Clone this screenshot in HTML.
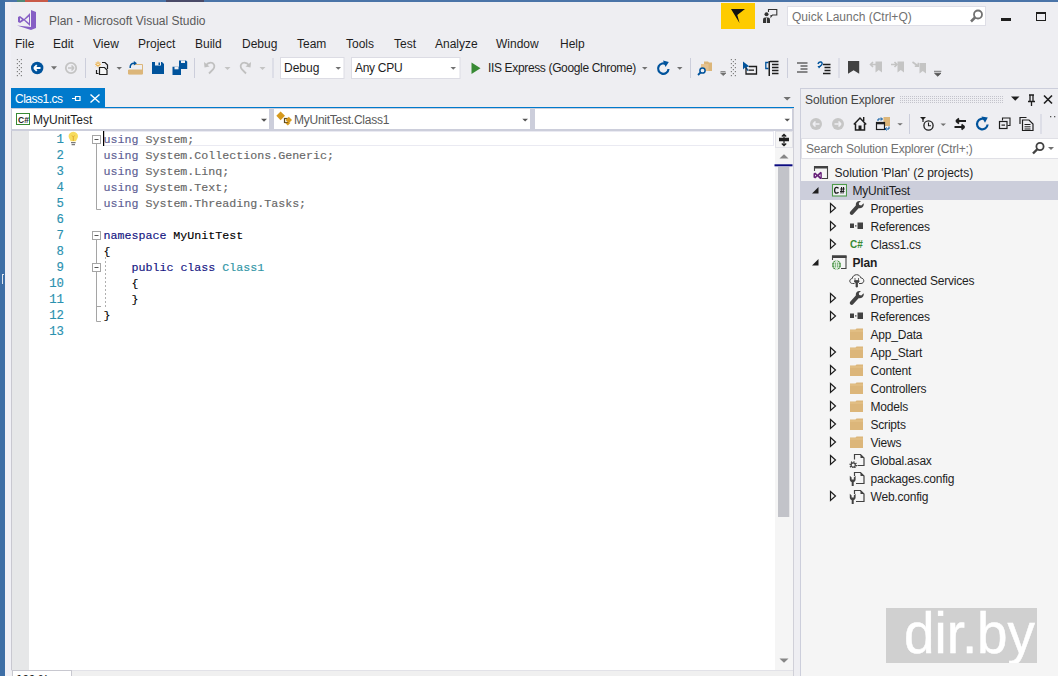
<!DOCTYPE html>
<html><head><meta charset="utf-8">
<style>
*{margin:0;padding:0;box-sizing:border-box}
html,body{width:1058px;height:676px;overflow:hidden;background:#eeeef2;font-family:"Liberation Sans",sans-serif;font-size:12px;color:#1e1e1e}
.a{position:absolute}
.t{position:absolute;white-space:nowrap;line-height:14px}
.mono{font-family:"Liberation Mono",monospace;font-size:11.65px;line-height:16px;white-space:pre;-webkit-text-stroke:0.15px currentColor}
.arr{position:absolute;width:0;height:0;border-left:3px solid transparent;border-right:3px solid transparent;border-top:3px solid #717171}
.sep{position:absolute;width:1px;background:#cccedb}
</style></head><body>
<!-- frame -->
<div class="a" style="left:0;top:0;width:1058px;height:2px;background:#4a74a8"></div>
<div class="a" style="left:17px;top:0;width:8px;height:2px;background:#4f8a78"></div>
<div class="a" style="left:25px;top:0;width:23px;height:2px;background:#c95a48"></div>
<div class="a" style="left:166px;top:0;width:38px;height:2px;background:#4a4a68"></div>
<div class="a" style="left:0;top:0;width:5px;height:676px;background:#3d6ea6"></div>
<div class="a" style="left:2px;top:274px;width:2px;height:10px;border-left:1px solid #dfe6f0;border-top:1px solid #dfe6f0"></div>
<div class="a" style="left:5px;top:2px;width:6px;height:674px;background:#f0f0f6"></div>
<div class="a" style="left:11px;top:108px;width:1px;height:562px;background:#c8c8d0"></div>

<!-- title bar -->
<svg class="a" style="left:17px;top:10px" width="20" height="20" viewBox="0 0 20 20">
  <path d="M14 0 L19 2 L19 18 L14 20 L0 15.5 L14 17 Z" fill="#865fc5"/>
  <path d="M3 6 L7 9 L13 3 L13 16 L7 10.5 L3 13 L1 12 L1 7 Z M3 8 L3 11 L5 9.5 Z M8 9.8 L12 13 L12 6.5 Z" fill="#865fc5" fill-rule="evenodd"/>
</svg>
<div class="t" style="left:49px;top:14px;color:#5a5a5a">Plan - Microsoft Visual Studio</div>

<div class="a" style="left:721px;top:3px;width:34px;height:26px;background:#fecb00"></div>
<svg class="a" style="left:729px;top:7px" width="18" height="18" viewBox="729 7 18 18"><path d="M731 9 H745 L737.3 15 L739.5 23 Z" fill="#111"/></svg>
<svg class="a" style="left:760px;top:7px" width="20" height="18" viewBox="760 7 20 18"><path d="M768.5 12 V9.5 H776.8 V15 H772.5 L771 16.8 V15" fill="none" stroke="#333" stroke-width="1.1"/><circle cx="766.5" cy="14.3" r="2" fill="#333"/><path d="M763 23 V19.5 Q763 17.5 765 17.5 H768 Q770 17.5 770 19.5 V23 Z" fill="#333"/><rect x="766.2" y="18" width="0.8" height="5" fill="#eeeef2"/></svg>
<div class="a" style="left:787px;top:6px;width:199px;height:20px;background:#fff;border:1px solid #dedee6"></div>
<div class="t" style="left:792px;top:10px;color:#717171">Quick Launch (Ctrl+Q)</div>
<svg class="a" style="left:969px;top:9px" width="15" height="15" viewBox="0 0 15 15"><circle cx="9" cy="5.5" r="4" fill="none" stroke="#717171" stroke-width="1.8"/><path d="M6.5 8 L2 12.5" stroke="#717171" stroke-width="2.5"/></svg>
<div class="a" style="left:1001px;top:18px;width:10px;height:3px;background:#1e1e1e"></div>
<div class="a" style="left:1036px;top:12px;width:10px;height:9px;border:1px solid #1e1e1e;border-top-width:2px"></div>

<!-- menu -->
<div class="t" style="left:15px;top:37px">File</div>
<div class="t" style="left:53px;top:37px">Edit</div>
<div class="t" style="left:93px;top:37px">View</div>
<div class="t" style="left:138px;top:37px">Project</div>
<div class="t" style="left:195px;top:37px">Build</div>
<div class="t" style="left:242px;top:37px">Debug</div>
<div class="t" style="left:297px;top:37px">Team</div>
<div class="t" style="left:346px;top:37px">Tools</div>
<div class="t" style="left:394px;top:37px">Test</div>
<div class="t" style="left:435px;top:37px">Analyze</div>
<div class="t" style="left:496px;top:37px">Window</div>
<div class="t" style="left:560px;top:37px">Help</div>

<!-- TOOLBAR -->
<svg class="a" style="left:0;top:54px" width="1058" height="30" viewBox="0 54 1058 30">
<g fill="#808080">
<rect x="16.8" y="59" width="1.2" height="1.2"/><rect x="20.8" y="59" width="1.2" height="1.2"/>
<rect x="18.8" y="61" width="1.2" height="1.2"/>
<rect x="16.8" y="63" width="1.2" height="1.2"/><rect x="20.8" y="63" width="1.2" height="1.2"/>
<rect x="18.8" y="65" width="1.2" height="1.2"/>
<rect x="16.8" y="67" width="1.2" height="1.2"/><rect x="20.8" y="67" width="1.2" height="1.2"/>
<rect x="18.8" y="69" width="1.2" height="1.2"/>
<rect x="16.8" y="71" width="1.2" height="1.2"/><rect x="20.8" y="71" width="1.2" height="1.2"/>
<rect x="18.8" y="73" width="1.2" height="1.2"/>
<rect x="16.8" y="75" width="1.2" height="1.2"/><rect x="20.8" y="75" width="1.2" height="1.2"/>
<rect x="730.8" y="59" width="1.2" height="1.2"/><rect x="734.8" y="59" width="1.2" height="1.2"/>
<rect x="732.8" y="61" width="1.2" height="1.2"/>
<rect x="730.8" y="63" width="1.2" height="1.2"/><rect x="734.8" y="63" width="1.2" height="1.2"/>
<rect x="732.8" y="65" width="1.2" height="1.2"/>
<rect x="730.8" y="67" width="1.2" height="1.2"/><rect x="734.8" y="67" width="1.2" height="1.2"/>
<rect x="732.8" y="69" width="1.2" height="1.2"/>
<rect x="730.8" y="71" width="1.2" height="1.2"/><rect x="734.8" y="71" width="1.2" height="1.2"/>
<rect x="732.8" y="73" width="1.2" height="1.2"/>
<rect x="730.8" y="75" width="1.2" height="1.2"/><rect x="734.8" y="75" width="1.2" height="1.2"/>
</g>
<!-- back -->
<circle cx="37.2" cy="68" r="6.2" fill="#00539c"/>
<path d="M34 68 L40.5 68 M34 68 L36.8 65.2 M34 68 L36.8 70.8" stroke="#fff" stroke-width="1.8" fill="none"/>
<path d="M51 66.3 L57 66.3 L54 69.7 Z" fill="#717171"/>
<!-- fwd -->
<circle cx="71" cy="68" r="5.2" fill="none" stroke="#c4c4c4" stroke-width="1.8"/>
<path d="M74 68 L68 68 M74 68 L71.5 65.5 M74 68 L71.5 70.5" stroke="#c4c4c4" stroke-width="1.5" fill="none"/>
<rect x="85" y="58" width="1" height="20" fill="#cccedb"/>
<!-- new project -->
<path d="M98 61.3 V67.3 M95 64.3 H101 M95.9 62.2 L100.1 66.4 M100.1 62.2 L95.9 66.4" stroke="#f0a830" stroke-width="0.8"/><circle cx="98" cy="64.3" r="1.3" fill="#f6f6f6" stroke="#e8a020" stroke-width="0.7"/>
<path d="M99.5 67.5 H104.5 L107 70 V74.5 H99.5 Z" fill="#f6f6f6" stroke="#1e1e1e" stroke-width="1.2"/>
<path d="M102 62.5 H105 L107.5 65 V69" fill="none" stroke="#1e1e1e" stroke-width="1.2"/>
<path d="M96.5 70 V73.5 H98.5" fill="none" stroke="#1e1e1e" stroke-width="1.2"/>
<path d="M116.5 67 L122 67 L119.25 69.8 Z" fill="#717171"/>
<!-- open -->
<path d="M134.5 64.5 H142.5 V74 H128.5 V70" fill="none" stroke="#dcb67a" stroke-width="1"/>
<rect x="128.5" y="69.5" width="14" height="4.7" fill="#dcb67a"/>
<path d="M130.2 68 Q129.8 63.2 134.3 63.2" fill="none" stroke="#00539c" stroke-width="1.5"/>
<path d="M133.8 61 L137 63.2 L133.8 65.4 Z" fill="#00539c"/>
<!-- save -->
<path d="M152 62 H162 L164 64 V74 H152 Z" fill="#00539c"/>
<rect x="155" y="62" width="6" height="3.5" fill="#eeeef2"/><rect x="158.5" y="62.5" width="1.5" height="2.5" fill="#00539c"/>
<!-- save all -->
<path d="M179 60.5 H186 L187.2 61.7 V69 H179 Z" fill="#00539c"/>
<rect x="181" y="60.5" width="4" height="2.5" fill="#eeeef2"/>
<path d="M172.5 66.8 H179.5 L181 68.3 V75 H172.5 Z" fill="#00539c"/>
<rect x="174.5" y="66.8" width="4" height="2.5" fill="#eeeef2"/>
<rect x="194" y="58" width="1" height="20" fill="#cccedb"/>
<!-- undo -->
<path d="M205.5 65.5 Q209 61.5 212.5 63 Q216 65.5 213 69.5 L209 73.5" fill="none" stroke="#c0c0c0" stroke-width="1.8"/>
<path d="M204 62 L204.5 67.5 L209.5 66.5 Z" fill="#c0c0c0"/>
<path d="M224.5 67 L230.5 67 L227.5 70 Z" fill="#c4c4c4"/>
<!-- redo -->
<path d="M249.5 65.5 Q246 61.5 242.5 63 Q239 65.5 242 69.5 L246 73.5" fill="none" stroke="#c0c0c0" stroke-width="1.8"/>
<path d="M251 62 L250.5 67.5 L245.5 66.5 Z" fill="#c0c0c0"/>
<path d="M259.5 67 L265.5 67 L262.5 70 Z" fill="#c4c4c4"/>
<rect x="272.5" y="58" width="1" height="20" fill="#cccedb"/>
<!-- combo boxes -->
<rect x="280.5" y="57.5" width="63.5" height="21" fill="#fff" stroke="#dcdce4"/>
<path d="M335.5 67 L341 67 L338.25 69.8 Z" fill="#717171"/>
<rect x="351.5" y="57.5" width="108.5" height="21" fill="#fff" stroke="#dcdce4"/>
<path d="M450.5 67 L456 67 L453.25 69.8 Z" fill="#717171"/>
<!-- play -->
<path d="M471.5 62.5 L480.5 68.2 L471.5 74 Z" fill="#388a34"/>
<path d="M642 67 L647.5 67 L644.75 69.8 Z" fill="#717171"/>
<!-- refresh -->
<path d="M666.5 64.5 A5.2 5.2 0 1 0 668.5 69" fill="none" stroke="#00539c" stroke-width="2.2"/>
<path d="M663 60.5 L668.8 62 L665.5 67 Z" fill="#00539c"/>
<path d="M677 67 L682.5 67 L679.75 69.8 Z" fill="#717171"/>
<rect x="690" y="58" width="1" height="20" fill="#cccedb"/>
<!-- find in files -->
<path d="M704 61.5 H708 L709 62.5 H712 V71 H704 Z" fill="#dcb67a"/>
<rect x="701" y="64" width="7.5" height="7" fill="#e6c28f"/>
<circle cx="702.5" cy="70.5" r="2.6" fill="#eeeef2" stroke="#00539c" stroke-width="1.5"/>
<path d="M700.5 72.5 L698 75" stroke="#00539c" stroke-width="1.8"/>
<path d="M720.5 71.5 H725.5 M720.5 73 L726 73 L723.25 75.5 Z" stroke="#717171" stroke-width="0.8" fill="#717171"/>
<!-- icons -->
<path d="M743 61.5 L743 69.5 L745 67.5 L747.5 71 L748.5 70.3 L746.5 67 L749.5 66.5 Z" fill="#00539c"/>
<path d="M746 67.5 V74 H756.5 V66.5 H749" fill="none" stroke="#1e1e1e" stroke-width="1.3"/>
<rect x="748.5" y="69.5" width="5.5" height="1.3" fill="#1e1e1e"/>
<path d="M768.5 62.5 H765.8 V68.5 H768.5" fill="none" stroke="#00539c" stroke-width="1.3"/>
<rect x="768.5" y="61" width="1.5" height="15" fill="#1e1e1e"/>
<path d="M770 61.5 H778.5 M772 64.5 H778.5 M772 67.5 H778.5 M772 70.5 H778.5 M772 73.5 H778.5" stroke="#1e1e1e" stroke-width="1.3"/>
<rect x="787" y="58" width="1" height="20" fill="#cccedb"/>
<path d="M797 63 H807.5 M800.5 66 H807.5 M800.5 69 H807.5 M797 72 H807.5" stroke="#1e1e1e" stroke-width="1.2"/>
<path d="M818 64 Q818.5 61.5 821 62 Q823 63 821.5 65 L819 67" fill="none" stroke="#00539c" stroke-width="1.4"/>
<path d="M817.5 66 L821 66 L819 68.5 Z" fill="#00539c"/>
<path d="M823 64.5 H830.5 M824.5 67.5 H830.5 M824.5 70.5 H830.5 M823 73.5 H830.5" stroke="#1e1e1e" stroke-width="1.3"/>
<rect x="838.5" y="58" width="1" height="20" fill="#cccedb"/>
<path d="M848 61 H859.2 V73.7 L853.6 70.2 L848 73.7 Z" fill="#424242"/>
<g fill="#c4c4c4">
<path d="M875.5 61.5 H882 V72.5 L878.75 70 L875.5 72.5 Z"/>
<path d="M897.5 61.5 H904 V72.5 L900.75 70 L897.5 72.5 Z"/>
<path d="M919.5 63 H926 V73.5 L922.75 71 L919.5 73.5 Z"/>
</g>
<g fill="none" stroke="#c4c4c4" stroke-width="1.6">
<path d="M876 64.5 H870.5 M873 62 L870.5 64.5 L873 67"/>
<path d="M891 64.5 H897 M894.5 62 L897 64.5 L894.5 67"/>
<path d="M912.5 62 L918 66 M918.3 62.8 V66.3 H914.8"/>
</g>
<path d="M934 71.3 H941.3 M934.5 73.2 L941 73.2 L937.75 76.3 Z" stroke="#555" stroke-width="0.8" fill="#555"/>
</svg>
<div class="t" style="left:284px;top:61px">Debug</div>
<div class="t" style="left:355px;top:61px;letter-spacing:-0.3px">Any CPU</div>
<div class="t" style="left:488px;top:61px;letter-spacing:-0.35px">IIS Express (Google Chrome)</div>


<!-- document tab -->
<div class="a" style="left:11px;top:88px;width:94px;height:20px;background:#007acc"></div>
<div class="t" style="left:15px;top:92px;color:#fff;letter-spacing:-0.5px">Class1.cs</div>
<svg class="a" style="left:70px;top:93px" width="32" height="12" viewBox="70 93 32 12">
<path d="M72 98.5 H75.5 M75.5 96 V101 M75.5 96.5 H80 V100.5 H75.5" fill="none" stroke="#fff" stroke-width="1.2"/>
<path d="M90.5 94.5 L99.5 102.5 M99.5 94.5 L90.5 102.5" stroke="#fff" stroke-width="1.4"/>
</svg>
<div class="a" style="left:11px;top:107px;width:783px;height:2px;background:#007acc"></div>
<svg class="a" style="left:783px;top:96px" width="9" height="6" viewBox="0 0 9 6"><path d="M0.5 1 H7.8 L4.15 4.6 Z" fill="#717171"/></svg>

<!-- nav bar -->
<div class="a" style="left:11px;top:108px;width:782px;height:23px;background:#cccedb"></div>
<div class="a" style="left:12px;top:109px;width:257px;height:20px;background:#fff"></div>
<div class="a" style="left:274px;top:109px;width:256px;height:20px;background:#fff"></div>
<div class="a" style="left:535px;top:109px;width:257px;height:20px;background:#fff"></div>
<svg class="a" style="left:0;top:108px" width="800" height="24" viewBox="0 108 800 24">
<rect x="16.5" y="113.5" width="13" height="11" fill="#fff" stroke="#388a34"/>
<text x="18" y="122.5" font-family="Liberation Sans" font-size="8.5" font-weight="bold" fill="#1e1e1e">C#</text>
<path d="M261 118.8 L267 118.8 L264 121.8 Z" fill="#555"/>
<path d="M522.3 118.7 L528 118.7 L525.15 121.5 Z" fill="#555"/>
<path d="M784.5 118.7 L790 118.7 L787.25 121.5 Z" fill="#555"/>
<path d="M276.3 115.8 L280.6 111.5 L285 115.8 L280.6 120.2 Z" fill="#d69a1e"/>
<rect x="284.5" y="118.5" width="4" height="4" fill="none" stroke="#5e4a1e" stroke-width="1.2"/>
<path d="M285.5 120 L288.8 116.7 L292 120 L288.8 123.3 Z" fill="#d69a1e"/>
<path d="M285 122.8 L287.8 125.6 L290.6 122.8 Z" fill="#d69a1e"/>
</svg>
<div class="t" style="left:33px;top:113px">MyUnitTest</div>
<div class="t" style="left:294px;top:113px;color:#5a5a5a;letter-spacing:-0.25px">MyUnitTest.Class1</div>
<!-- editor -->
<div class="a" style="left:11px;top:131px;width:1px;height:539px;background:#c8c8d0"></div>
<div class="a" style="left:12px;top:131px;width:17px;height:539px;background:#e6e7e8"></div>
<div class="a" style="left:29px;top:131px;width:746px;height:539px;background:#fff"></div>
<div class="a" style="left:103px;top:131px;width:671px;height:15px;border:1px solid #eaeaf2"></div>

<style>.u{color:#5e5e94}.g{color:#676767}.k{color:#141482}.c{color:#2f95a5}.ln{position:absolute;left:30px;width:34px;text-align:right;color:#2b91af;font-size:12.3px}</style>
<div class="a mono ln" style="top:132px">1</div>
<div class="a mono" style="left:103.5px;top:132px;color:#000"><span class="u">using</span> <span class="g">System;</span></div>
<div class="a mono ln" style="top:148px">2</div>
<div class="a mono" style="left:103.5px;top:148px;color:#000"><span class="u">using</span> <span class="g">System.Collections.Generic;</span></div>
<div class="a mono ln" style="top:164px">3</div>
<div class="a mono" style="left:103.5px;top:164px;color:#000"><span class="u">using</span> <span class="g">System.Linq;</span></div>
<div class="a mono ln" style="top:180px">4</div>
<div class="a mono" style="left:103.5px;top:180px;color:#000"><span class="u">using</span> <span class="g">System.Text;</span></div>
<div class="a mono ln" style="top:196px">5</div>
<div class="a mono" style="left:103.5px;top:196px;color:#000"><span class="u">using</span> <span class="g">System.Threading.Tasks;</span></div>
<div class="a mono ln" style="top:212px">6</div>
<div class="a mono ln" style="top:228px">7</div>
<div class="a mono" style="left:103.5px;top:228px;color:#000"><span class="k">namespace</span> MyUnitTest</div>
<div class="a mono ln" style="top:244px">8</div>
<div class="a mono" style="left:103.5px;top:244px;color:#000">{</div>
<div class="a mono ln" style="top:260px">9</div>
<div class="a mono" style="left:103.5px;top:260px;color:#000">    <span class="k">public</span> <span class="k">class</span> <span class="c">Class1</span></div>
<div class="a mono ln" style="top:276px">10</div>
<div class="a mono" style="left:103.5px;top:276px;color:#000">    {</div>
<div class="a mono ln" style="top:292px">11</div>
<div class="a mono" style="left:103.5px;top:292px;color:#000">    }</div>
<div class="a mono ln" style="top:308px">12</div>
<div class="a mono" style="left:103.5px;top:308px;color:#000">}</div>
<div class="a mono ln" style="top:324px">13</div>
<svg class="a" style="left:80px;top:128px" width="40" height="210" viewBox="80 128 40 210">
<g fill="#fff" stroke="#a5a5a5" stroke-width="1">
<rect x="92.5" y="135.5" width="8" height="8"/>
<rect x="92.5" y="231.5" width="8" height="8"/>
<rect x="92.5" y="263.5" width="8" height="8"/>
</g>
<g stroke="#555" stroke-width="1">
<path d="M94.5 139.5 H98.5 M94.5 235.5 H98.5 M94.5 267.5 H98.5"/>
</g>
<g stroke="#a5a5a5" stroke-width="1" fill="none">
<path d="M96.5 144 V209.5 H101"/>
<path d="M96.5 240 V263"/>
<path d="M96.5 272 V321.5 H101"/>
<path d="M96.5 306.5 H101"/>
</g>
<path d="M105.5 257 V307" stroke="#b0b0b0" stroke-width="1" stroke-dasharray="2 2"/>
<rect x="103" y="131" width="1.2" height="15" fill="#000"/>
</svg>
<svg class="a" style="left:66px;top:130px" width="14" height="18" viewBox="66 130 14 18">
<path d="M73.3 131.8 C70.3 131.8 68.6 134 68.6 136.3 C68.6 138.3 70 139.4 70.7 141.2 H75.9 C76.6 139.4 78 138.3 78 136.3 C78 134 76.3 131.8 73.3 131.8 Z" fill="#f7dc5e"/>
<path d="M72 135.5 L73.3 137 L74.6 135.5 M73.3 137 V141" fill="none" stroke="#e0a82a" stroke-width="0.9"/>
<path d="M71 142.6 H75.6 M71.6 144.6 H75" stroke="#7a7a7a" stroke-width="1.1"/>
</svg>


<div class="a" style="left:11px;top:670px;width:782px;height:6px;background:#f0f0f0;border-top:1px solid #e2e2e8"></div>
<div class="a" style="left:12px;top:670px;width:60px;height:6px;background:#fff;border:1px solid #c8c8d0;border-bottom:none"></div>
<div class="t" style="left:16px;top:672px;font-size:11.5px;color:#1e1e1e;font-weight:bold">100 %</div>
<!-- scrollbar -->
<div class="a" style="left:775px;top:131px;width:18px;height:539px;background:#f5f5f5"></div>
<svg class="a" style="left:774px;top:130px" width="20" height="540" viewBox="774 130 20 540">
<rect x="775.5" y="131.5" width="17" height="16" fill="#f5f5f5" stroke="#e2e2e8"/>
<path d="M779 139.5 H789 M784 134.5 V138 M784 141 V145.5 M781.8 136.5 L784 134.3 L786.2 136.5 M781.8 143.5 L784 145.7 L786.2 143.5 M779 138.3 H789 M779 140.7 H789" fill="none" stroke="#1e1e1e" stroke-width="1.2"/>
<path d="M779.5 158.5 L784 154.3 L788.5 158.5 Z" fill="#868686"/>
<rect x="774.5" y="164.3" width="18" height="2" fill="#0b0b80"/>
<rect x="778" y="167" width="11.3" height="350" fill="#c2c3c9"/>
<path d="M779.5 658.5 L784 662.7 L788.5 658.5 Z" fill="#868686"/>
</svg>

<!-- panel separator -->
<div class="a" style="left:793px;top:108px;width:1px;height:568px;background:#d0d0d8"></div>

<!-- solution explorer -->
<div class="a" style="left:800px;top:88px;width:258px;height:588px;background:#f5f5f5;border-left:1px solid #cccedb;border-top:1px solid #cccedb"></div>
<div class="a" style="left:801px;top:89px;width:257px;height:21px;background:#eeeef2"></div>
<div class="t" style="left:805px;top:93px;color:#444;letter-spacing:-0.1px">Solution Explorer</div>
<div class="a" style="left:801px;top:110px;width:257px;height:28px;background:#eeeef2"></div>
<div class="a" style="left:801px;top:138px;width:257px;height:21px;background:#fff;border:1px solid #e0e0e6;border-right:none"></div>
<div class="t" style="left:806px;top:142px;color:#717171;letter-spacing:-0.2px">Search Solution Explorer (Ctrl+;)</div>
<svg class="a" style="left:800px;top:88px" width="258" height="50" viewBox="800 88 258 50">
<defs><pattern id="dots" x="0" y="0" width="2" height="2" patternUnits="userSpaceOnUse"><rect x="0" y="0" width="1" height="1" fill="#c4c4cc"/></pattern></defs>
<rect x="900" y="96" width="104" height="8" fill="url(#dots)"/>
<path d="M1011 96.5 H1019.5 L1015.25 100.8 Z" fill="#1e1e1e"/>
<path d="M1029 95 H1034 M1030 95 V101.5 M1033 95 V101.5 M1028 101.5 H1035 M1031.5 101.5 V106" stroke="#1e1e1e" stroke-width="1.3" fill="none"/>
<path d="M1044 95.5 L1052 103.5 M1052 95.5 L1044 103.5" stroke="#1e1e1e" stroke-width="1.6"/>
<!-- toolbar -->
<circle cx="816" cy="124" r="6" fill="#c6c6c6"/>
<path d="M813 124 H819.5 M813 124 L815.5 121.5 M813 124 L815.5 126.5" stroke="#eeeef2" stroke-width="1.6" fill="none"/>
<circle cx="838" cy="124" r="6" fill="#c6c6c6"/>
<path d="M841 124 H834.5 M841 124 L838.5 121.5 M841 124 L838.5 126.5" stroke="#eeeef2" stroke-width="1.6" fill="none"/>
<path d="M853.8 124.5 L860 118 L866.2 124.5" fill="none" stroke="#1e1e1e" stroke-width="1.5"/>
<path d="M855.5 123.5 V130 H864.5 V123.5" fill="none" stroke="#1e1e1e" stroke-width="1.5"/>
<rect x="858.5" y="125.5" width="3" height="4.5" fill="#1e1e1e"/>
<rect x="863" y="117" width="1.4" height="4" fill="#1e1e1e"/>
<rect x="883.5" y="117" width="6.5" height="9" fill="#dcb67a"/>
<rect x="876.5" y="122.5" width="8" height="7" fill="#eeeef2" stroke="#1e1e1e" stroke-width="1.2"/>
<rect x="876.5" y="122.5" width="8" height="1.8" fill="#1e1e1e"/>
<path d="M878 121 V119 H882 M881 117.5 L882.5 119 L881 120.5" fill="none" stroke="#00539c" stroke-width="1"/>
<path d="M889 126.5 V129 H885.5 M886.5 127.5 L885 129 L886.5 130.5" fill="none" stroke="#00539c" stroke-width="1"/>
<path d="M897.3 123.2 H902.8 L900.05 125.6 Z" fill="#717171"/>
<rect x="909" y="114" width="1" height="20" fill="#cccedb"/>
<path d="M920 117 H926 L923 120 Z" fill="#1e1e1e"/><rect x="922.4" y="118" width="1.2" height="4" fill="#1e1e1e"/>
<circle cx="928.5" cy="125.5" r="4.6" fill="none" stroke="#1e1e1e" stroke-width="1.3"/>
<path d="M928.5 122.5 V125.8 H931" fill="none" stroke="#1e1e1e" stroke-width="1.1"/>
<path d="M940.5 123.5 H946 L943.25 125.9 Z" fill="#717171"/>
<path d="M956 121 H966 M956 121 L959 118.5 M956 121 L959 123.5 M954.5 127 H964.5 M964.5 127 L961.5 124.5 M964.5 127 L961.5 129.5" fill="none" stroke="#1e1e1e" stroke-width="1.8"/>
<path d="M985.5 119.8 A5.3 5.3 0 1 0 987.6 124.5" fill="none" stroke="#00539c" stroke-width="2.2"/>
<path d="M981.5 116.5 L987.8 117.5 L985 122.8 Z" fill="#00539c"/>
<path d="M1002.5 120.5 V118 H1010 V125.5 H1007.5" fill="none" stroke="#1e1e1e" stroke-width="1.1"/>
<rect x="999.5" y="121.5" width="7.5" height="7" fill="#eeeef2" stroke="#1e1e1e" stroke-width="1.2"/>
<rect x="1001.5" y="124.5" width="3.5" height="1.2" fill="#1e1e1e"/>
<path d="M1020 124 V117.5 H1026.5 M1022.5 120 H1029 L1033 124 V130.5 H1022.5 Z" fill="none" stroke="#1e1e1e" stroke-width="1.2"/>
<path d="M1024.5 124.5 H1030.5 M1024.5 126.8 H1030.5 M1024.5 129 H1030.5" stroke="#1e1e1e" stroke-width="1"/>
<rect x="1040.5" y="114" width="1" height="20" fill="#cccedb"/>
<rect x="1050" y="116" width="1.3" height="1.3" fill="#555"/><rect x="1054" y="116" width="1.3" height="1.3" fill="#555"/>
</svg>
<svg class="a" style="left:1028px;top:140px" width="30" height="18" viewBox="1028 140 30 18">
<circle cx="1040" cy="146.5" r="3.6" fill="none" stroke="#424242" stroke-width="1.8"/>
<path d="M1037.5 149 L1033 153.5" stroke="#424242" stroke-width="2.4"/>
<path d="M1048 147 H1054 L1051 150 Z" fill="#717171"/>
</svg>


<div class="a" style="left:801px;top:181px;width:257px;height:19px;background:#cccedb"></div>
<svg class="a" style="left:813px;top:165px" width="16" height="14" viewBox="0 0 16 14">
<path d="M1.5 6 V1.5 H14.5 V13.5 H9" fill="none" stroke="#424242" stroke-width="1.1"/><rect x="1" y="1" width="14" height="2.5" fill="#424242"/>
<path d="M0.5 8.5 L2.2 7.5 L4.5 9.5 L7.5 6.8 L8.8 7.5 V13.8 L7.5 14.5 L4.5 11.6 L2.2 13.6 L0.5 12.6 Z M2 9.5 V11.6 L3.3 10.5 Z M6 10.5 L7.5 12 V9 Z" fill="#68217a" fill-rule="evenodd"/></svg>
<div class="t" style="left:834.5px;top:166px">Solution 'Plan' (2 projects)</div>
<svg class="a" style="left:810px;top:185px" width="10" height="10" viewBox="0 0 10 10"><path d="M8.5 2 V8.5 H2 Z" fill="#1e1e1e"/></svg>
<svg class="a" style="left:831px;top:183px" width="16" height="14" viewBox="0 0 16 14">
<rect x="1.5" y="1.5" width="14" height="11.5" fill="#eeeef2" stroke="#4e9a4a" stroke-width="1.1"/>
<path d="M7.5 5.3 Q6.8 4.3 5.6 4.3 Q3.6 4.3 3.6 7.2 Q3.6 10.2 5.6 10.2 Q6.8 10.2 7.5 9.2" fill="none" stroke="#1e1e1e" stroke-width="1.3"/>
<path d="M9.3 6 H13.7 M9 8.5 H13.4 M10.6 4 L10 10.5 M12.6 4 L12 10.5" stroke="#1e1e1e" stroke-width="1.1"/></svg>
<div class="t" style="left:852.5px;top:184px;letter-spacing:-0.2px">MyUnitTest</div>
<svg class="a" style="left:828px;top:202px" width="10" height="12" viewBox="0 0 10 12"><path d="M2.5 1.5 L7.5 6 L2.5 10.5 Z" fill="none" stroke="#1e1e1e" stroke-width="1.2"/></svg>
<svg class="a" style="left:849px;top:200px" width="16" height="16" viewBox="0 0 16 16">
<path d="M10.5 1 C8 1 6.5 3 6.8 5.5 L1.2 11.8 C0.5 12.6 0.7 13.8 1.5 14.5 C2.3 15.2 3.5 15.1 4.1 14.3 L9.6 8.2 C12.2 8.8 14.6 7 14.8 4.5 L14.6 3.3 L12.3 5.5 L10.2 5 L9.8 3 L12 0.9 Z" fill="#424242"/></svg>
<div class="t" style="left:870.5px;top:202px;letter-spacing:-0.2px">Properties</div>
<svg class="a" style="left:828px;top:220px" width="10" height="12" viewBox="0 0 10 12"><path d="M2.5 1.5 L7.5 6 L2.5 10.5 Z" fill="none" stroke="#1e1e1e" stroke-width="1.2"/></svg>
<svg class="a" style="left:849px;top:218px" width="16" height="16" viewBox="0 0 16 16">
<rect x="1" y="5.5" width="4" height="4.5" fill="#424242"/><rect x="6" y="7.3" width="1.5" height="1.2" fill="#424242"/><rect x="8.5" y="4.5" width="5.5" height="6.5" fill="#424242"/></svg>
<div class="t" style="left:870.5px;top:220px;letter-spacing:-0.2px">References</div>
<svg class="a" style="left:828px;top:238px" width="10" height="12" viewBox="0 0 10 12"><path d="M2.5 1.5 L7.5 6 L2.5 10.5 Z" fill="none" stroke="#1e1e1e" stroke-width="1.2"/></svg>
<svg class="a" style="left:849px;top:236px" width="16" height="16" viewBox="0 0 16 16">
<text x="1" y="11.5" font-family="Liberation Sans" font-size="10" font-weight="bold" fill="#388a34">C#</text></svg>
<div class="t" style="left:870.5px;top:238px;letter-spacing:-0.2px">Class1.cs</div>
<svg class="a" style="left:810px;top:257px" width="10" height="10" viewBox="0 0 10 10"><path d="M8.5 2 V8.5 H2 Z" fill="#1e1e1e"/></svg>
<svg class="a" style="left:831px;top:254px" width="16" height="16" viewBox="0 0 16 16">
<path d="M1.5 6 V2 H15 V14.5 H10" fill="none" stroke="#424242" stroke-width="1.1"/><rect x="1" y="1.5" width="14.5" height="2.5" fill="#424242"/>
<circle cx="5.5" cy="11" r="4.5" fill="#388a34"/>
<path d="M1.3 11 H9.7 M5.5 6.5 V15.5 M2.3 8.8 H8.7 M2.3 13.2 H8.7" stroke="#e8f2e8" stroke-width="0.9"/>
<ellipse cx="5.5" cy="11" rx="2" ry="4.3" fill="none" stroke="#e8f2e8" stroke-width="0.9"/></svg>
<div class="t" style="left:852.5px;top:256px;font-weight:bold;letter-spacing:-0.2px">Plan</div>
<svg class="a" style="left:849px;top:272px" width="16" height="16" viewBox="0 0 16 16">
<path d="M5.5 11.5 H3.5 C1.8 11.5 0.8 10.3 0.8 9 C0.8 7.6 1.9 6.6 3.2 6.6 C3.5 4.3 5.3 2.7 7.6 2.7 C9.7 2.7 11.3 4 11.8 5.9 C13.4 5.9 14.8 7.2 14.8 8.8 C14.8 10.3 13.6 11.5 12 11.5 H10" fill="none" stroke="#424242" stroke-width="1"/>
<path d="M6 6 V8 M9.5 6 V8 M5.5 8.5 H10 V10 L8.5 11 V15 H7 V11 L5.5 10 Z" fill="#424242" stroke="#424242" stroke-width="0.8"/></svg>
<div class="t" style="left:870.5px;top:274px;letter-spacing:-0.2px">Connected Services</div>
<svg class="a" style="left:828px;top:292px" width="10" height="12" viewBox="0 0 10 12"><path d="M2.5 1.5 L7.5 6 L2.5 10.5 Z" fill="none" stroke="#1e1e1e" stroke-width="1.2"/></svg>
<svg class="a" style="left:849px;top:290px" width="16" height="16" viewBox="0 0 16 16">
<path d="M10.5 1 C8 1 6.5 3 6.8 5.5 L1.2 11.8 C0.5 12.6 0.7 13.8 1.5 14.5 C2.3 15.2 3.5 15.1 4.1 14.3 L9.6 8.2 C12.2 8.8 14.6 7 14.8 4.5 L14.6 3.3 L12.3 5.5 L10.2 5 L9.8 3 L12 0.9 Z" fill="#424242"/></svg>
<div class="t" style="left:870.5px;top:292px;letter-spacing:-0.2px">Properties</div>
<svg class="a" style="left:828px;top:310px" width="10" height="12" viewBox="0 0 10 12"><path d="M2.5 1.5 L7.5 6 L2.5 10.5 Z" fill="none" stroke="#1e1e1e" stroke-width="1.2"/></svg>
<svg class="a" style="left:849px;top:308px" width="16" height="16" viewBox="0 0 16 16">
<rect x="1" y="5.5" width="4" height="4.5" fill="#424242"/><rect x="6" y="7.3" width="1.5" height="1.2" fill="#424242"/><rect x="8.5" y="4.5" width="5.5" height="6.5" fill="#424242"/></svg>
<div class="t" style="left:870.5px;top:310px;letter-spacing:-0.2px">References</div>
<svg class="a" style="left:849px;top:326px" width="16" height="16" viewBox="0 0 16 16">
<path d="M1 3.5 H6.5 L7.5 2.5 H14 V14 H1 Z" fill="#dcb67a"/><path d="M1 5 H14" stroke="#e8c992" stroke-width="0.8"/></svg>
<div class="t" style="left:870.5px;top:328px;letter-spacing:-0.2px">App_Data</div>
<svg class="a" style="left:828px;top:346px" width="10" height="12" viewBox="0 0 10 12"><path d="M2.5 1.5 L7.5 6 L2.5 10.5 Z" fill="none" stroke="#1e1e1e" stroke-width="1.2"/></svg>
<svg class="a" style="left:849px;top:344px" width="16" height="16" viewBox="0 0 16 16">
<path d="M1 3.5 H6.5 L7.5 2.5 H14 V14 H1 Z" fill="#dcb67a"/><path d="M1 5 H14" stroke="#e8c992" stroke-width="0.8"/></svg>
<div class="t" style="left:870.5px;top:346px;letter-spacing:-0.2px">App_Start</div>
<svg class="a" style="left:828px;top:364px" width="10" height="12" viewBox="0 0 10 12"><path d="M2.5 1.5 L7.5 6 L2.5 10.5 Z" fill="none" stroke="#1e1e1e" stroke-width="1.2"/></svg>
<svg class="a" style="left:849px;top:362px" width="16" height="16" viewBox="0 0 16 16">
<path d="M1 3.5 H6.5 L7.5 2.5 H14 V14 H1 Z" fill="#dcb67a"/><path d="M1 5 H14" stroke="#e8c992" stroke-width="0.8"/></svg>
<div class="t" style="left:870.5px;top:364px;letter-spacing:-0.2px">Content</div>
<svg class="a" style="left:828px;top:382px" width="10" height="12" viewBox="0 0 10 12"><path d="M2.5 1.5 L7.5 6 L2.5 10.5 Z" fill="none" stroke="#1e1e1e" stroke-width="1.2"/></svg>
<svg class="a" style="left:849px;top:380px" width="16" height="16" viewBox="0 0 16 16">
<path d="M1 3.5 H6.5 L7.5 2.5 H14 V14 H1 Z" fill="#dcb67a"/><path d="M1 5 H14" stroke="#e8c992" stroke-width="0.8"/></svg>
<div class="t" style="left:870.5px;top:382px;letter-spacing:-0.2px">Controllers</div>
<svg class="a" style="left:828px;top:400px" width="10" height="12" viewBox="0 0 10 12"><path d="M2.5 1.5 L7.5 6 L2.5 10.5 Z" fill="none" stroke="#1e1e1e" stroke-width="1.2"/></svg>
<svg class="a" style="left:849px;top:398px" width="16" height="16" viewBox="0 0 16 16">
<path d="M1 3.5 H6.5 L7.5 2.5 H14 V14 H1 Z" fill="#dcb67a"/><path d="M1 5 H14" stroke="#e8c992" stroke-width="0.8"/></svg>
<div class="t" style="left:870.5px;top:400px;letter-spacing:-0.2px">Models</div>
<svg class="a" style="left:828px;top:418px" width="10" height="12" viewBox="0 0 10 12"><path d="M2.5 1.5 L7.5 6 L2.5 10.5 Z" fill="none" stroke="#1e1e1e" stroke-width="1.2"/></svg>
<svg class="a" style="left:849px;top:416px" width="16" height="16" viewBox="0 0 16 16">
<path d="M1 3.5 H6.5 L7.5 2.5 H14 V14 H1 Z" fill="#dcb67a"/><path d="M1 5 H14" stroke="#e8c992" stroke-width="0.8"/></svg>
<div class="t" style="left:870.5px;top:418px;letter-spacing:-0.2px">Scripts</div>
<svg class="a" style="left:828px;top:436px" width="10" height="12" viewBox="0 0 10 12"><path d="M2.5 1.5 L7.5 6 L2.5 10.5 Z" fill="none" stroke="#1e1e1e" stroke-width="1.2"/></svg>
<svg class="a" style="left:849px;top:434px" width="16" height="16" viewBox="0 0 16 16">
<path d="M1 3.5 H6.5 L7.5 2.5 H14 V14 H1 Z" fill="#dcb67a"/><path d="M1 5 H14" stroke="#e8c992" stroke-width="0.8"/></svg>
<div class="t" style="left:870.5px;top:436px;letter-spacing:-0.2px">Views</div>
<svg class="a" style="left:828px;top:454px" width="10" height="12" viewBox="0 0 10 12"><path d="M2.5 1.5 L7.5 6 L2.5 10.5 Z" fill="none" stroke="#1e1e1e" stroke-width="1.2"/></svg>
<svg class="a" style="left:849px;top:452px" width="16" height="16" viewBox="0 -1 16 16">
<path d="M5.5 6.5 V1.5 H11.5 L15 5 V12.5 H8.5" fill="none" stroke="#424242" stroke-width="1.2"/>
<path d="M11.5 1.5 L15 5 H11.5 Z" fill="#424242"/>
<circle cx="4.2" cy="12" r="3.1" fill="none" stroke="#424242" stroke-width="1.5" stroke-dasharray="1.2 1.2"/>
<circle cx="4.2" cy="12" r="2.1" fill="none" stroke="#424242" stroke-width="1.2"/></svg>
<div class="t" style="left:870.5px;top:454px;letter-spacing:-0.2px">Global.asax</div>
<svg class="a" style="left:849px;top:470px" width="16" height="16" viewBox="0 -1 16 16">
<path d="M5.5 5 V1.5 H11.5 L15 5 V12.5 H7" fill="none" stroke="#424242" stroke-width="1.2"/>
<path d="M11.5 1.5 L15 5 H11.5 Z" fill="#424242"/>
<path d="M0.8 4.8 V8.6 C0.8 10.2 2 11.2 3.7 11.2 C5.4 11.2 6.6 10.2 6.6 8.6 V4.8 L4.8 6.4 V8.4 H2.6 V6.4 Z" fill="#424242"/><rect x="2.7" y="10.2" width="2" height="5.5" fill="#424242"/></svg>
<div class="t" style="left:870.5px;top:472px;letter-spacing:-0.2px">packages.config</div>
<svg class="a" style="left:828px;top:490px" width="10" height="12" viewBox="0 0 10 12"><path d="M2.5 1.5 L7.5 6 L2.5 10.5 Z" fill="none" stroke="#1e1e1e" stroke-width="1.2"/></svg>
<svg class="a" style="left:849px;top:488px" width="16" height="16" viewBox="0 -1 16 16">
<path d="M5.5 5 V1.5 H11.5 L15 5 V12.5 H7" fill="none" stroke="#424242" stroke-width="1.2"/>
<path d="M11.5 1.5 L15 5 H11.5 Z" fill="#424242"/>
<path d="M0.8 4.8 V8.6 C0.8 10.2 2 11.2 3.7 11.2 C5.4 11.2 6.6 10.2 6.6 8.6 V4.8 L4.8 6.4 V8.4 H2.6 V6.4 Z" fill="#424242"/><rect x="2.7" y="10.2" width="2" height="5.5" fill="#424242"/></svg>
<div class="t" style="left:870.5px;top:490px;letter-spacing:-0.2px">Web.config</div>

<!-- watermark -->
<div class="a" style="left:886px;top:608px;width:151px;height:55px;background:#d0d0d0;overflow:hidden"><div class="t" style="left:18px;top:-10px;color:#fff;font-size:58px;line-height:70px;transform:scaleX(0.945);transform-origin:0 0;-webkit-text-stroke:0.5px #fff">dir.by</div></div>
</body></html>
